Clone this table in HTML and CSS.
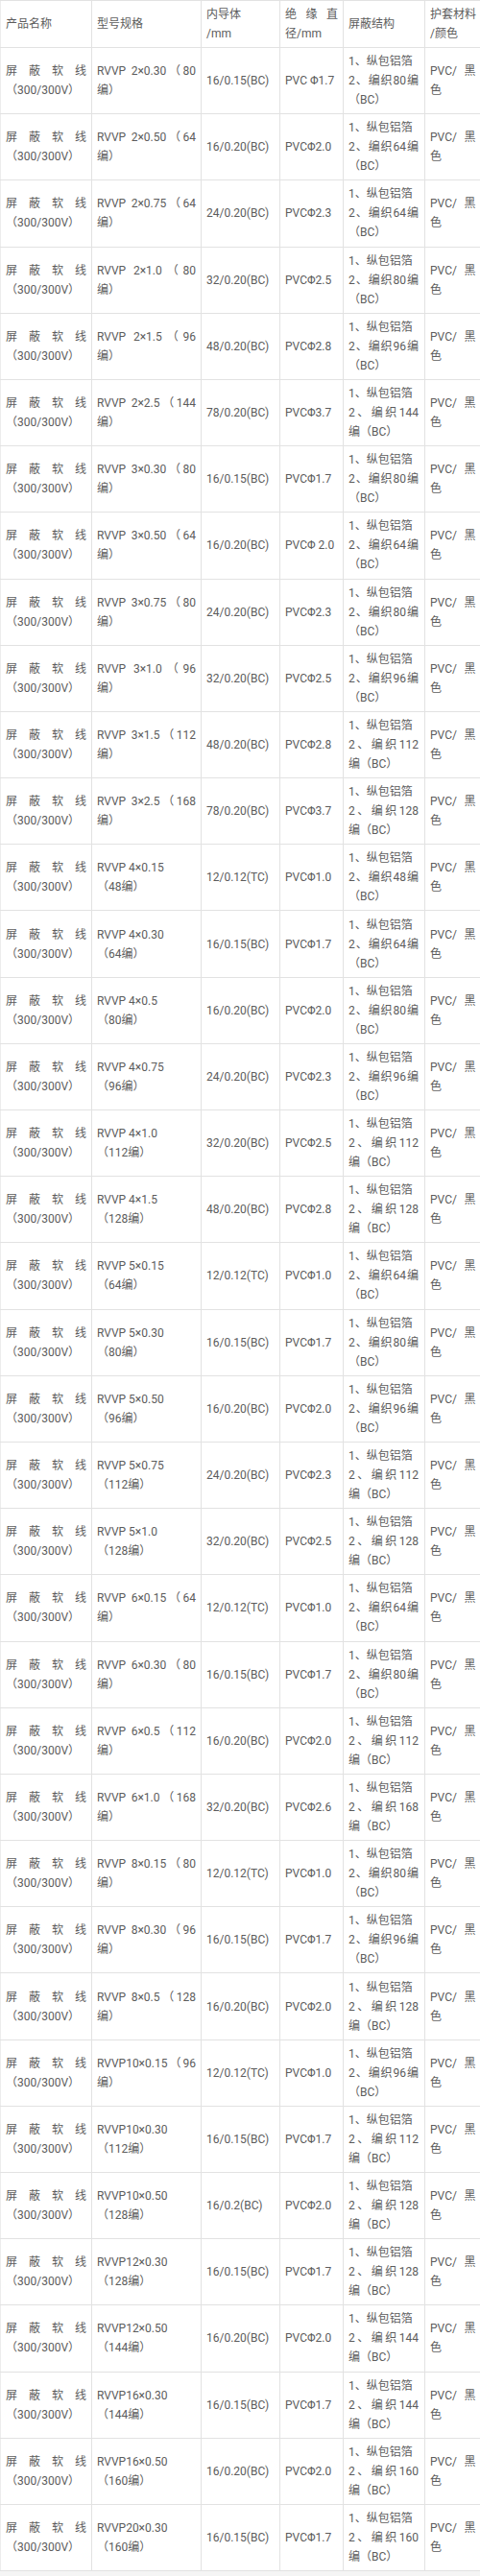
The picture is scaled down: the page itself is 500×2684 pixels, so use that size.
FILE: index.html
```html
<!DOCTYPE html>
<html lang="zh-CN">
<head>
<meta charset="utf-8">
<title>屏蔽软线规格表</title>
<link rel="stylesheet" href="styles.css">
</head>
<body>
<table class="spec">
<colgroup>
<col class="c1"><col class="c2"><col class="c3"><col class="c4"><col class="c5"><col class="c6">
</colgroup>
<thead>
<tr class="head">
<td>产品名称</td><td>型号规格</td><td>内导体<br>/mm</td><td>绝缘直径/mm</td><td>屏蔽结构</td><td class="nowrap">护套材料<br>/颜色</td>
</tr>
</thead>
<tbody>
<tr><td>屏蔽软线（300/300V）</td><td>RVVP 2×0.30（80编）</td><td>16/0.15(BC)</td><td>PVC Φ1.7</td><td>1、纵包铝箔<br>2、编织80编（BC）</td><td>PVC/黑色</td></tr>
<tr><td>屏蔽软线（300/300V）</td><td>RVVP 2×0.50（64编）</td><td>16/0.20(BC)</td><td>PVCΦ2.0</td><td>1、纵包铝箔<br>2、编织64编（BC）</td><td>PVC/黑色</td></tr>
<tr><td>屏蔽软线（300/300V）</td><td>RVVP 2×0.75（64编）</td><td>24/0.20(BC)</td><td>PVCΦ2.3</td><td>1、纵包铝箔<br>2、编织64编（BC）</td><td>PVC/黑色</td></tr>
<tr><td>屏蔽软线（300/300V）</td><td>RVVP 2×1.0（80编）</td><td>32/0.20(BC)</td><td>PVCΦ2.5</td><td>1、纵包铝箔<br>2、编织80编（BC）</td><td>PVC/黑色</td></tr>
<tr><td>屏蔽软线（300/300V）</td><td>RVVP 2×1.5（96编）</td><td>48/0.20(BC)</td><td>PVCΦ2.8</td><td>1、纵包铝箔<br>2、编织96编（BC）</td><td>PVC/黑色</td></tr>
<tr><td>屏蔽软线（300/300V）</td><td>RVVP 2×2.5（144编）</td><td>78/0.20(BC)</td><td>PVCΦ3.7</td><td>1、纵包铝箔<br>2、编织144编（BC）</td><td>PVC/黑色</td></tr>
<tr><td>屏蔽软线（300/300V）</td><td>RVVP 3×0.30（80编）</td><td>16/0.15(BC)</td><td>PVCΦ1.7</td><td>1、纵包铝箔<br>2、编织80编（BC）</td><td>PVC/黑色</td></tr>
<tr><td>屏蔽软线（300/300V）</td><td>RVVP 3×0.50（64编）</td><td>16/0.20(BC)</td><td>PVCΦ 2.0</td><td>1、纵包铝箔<br>2、编织64编（BC）</td><td>PVC/黑色</td></tr>
<tr><td>屏蔽软线（300/300V）</td><td>RVVP 3×0.75（80编）</td><td>24/0.20(BC)</td><td>PVCΦ2.3</td><td>1、纵包铝箔<br>2、编织80编（BC）</td><td>PVC/黑色</td></tr>
<tr><td>屏蔽软线（300/300V）</td><td>RVVP 3×1.0（96编）</td><td>32/0.20(BC)</td><td>PVCΦ2.5</td><td>1、纵包铝箔<br>2、编织96编（BC）</td><td>PVC/黑色</td></tr>
<tr><td>屏蔽软线（300/300V）</td><td>RVVP 3×1.5（112编）</td><td>48/0.20(BC)</td><td>PVCΦ2.8</td><td>1、纵包铝箔<br>2、编织112编（BC）</td><td>PVC/黑色</td></tr>
<tr><td>屏蔽软线（300/300V）</td><td>RVVP 3×2.5（168编）</td><td>78/0.20(BC)</td><td>PVCΦ3.7</td><td>1、纵包铝箔<br>2、编织128编（BC）</td><td>PVC/黑色</td></tr>
<tr><td>屏蔽软线（300/300V）</td><td>RVVP 4×0.15<br>（48编）</td><td>12/0.12(TC)</td><td>PVCΦ1.0</td><td>1、纵包铝箔<br>2、编织48编（BC）</td><td>PVC/黑色</td></tr>
<tr><td>屏蔽软线（300/300V）</td><td>RVVP 4×0.30<br>（64编）</td><td>16/0.15(BC)</td><td>PVCΦ1.7</td><td>1、纵包铝箔<br>2、编织64编（BC）</td><td>PVC/黑色</td></tr>
<tr><td>屏蔽软线（300/300V）</td><td>RVVP 4×0.5<br>（80编）</td><td>16/0.20(BC)</td><td>PVCΦ2.0</td><td>1、纵包铝箔<br>2、编织80编（BC）</td><td>PVC/黑色</td></tr>
<tr><td>屏蔽软线（300/300V）</td><td>RVVP 4×0.75<br>（96编）</td><td>24/0.20(BC)</td><td>PVCΦ2.3</td><td>1、纵包铝箔<br>2、编织96编（BC）</td><td>PVC/黑色</td></tr>
<tr><td>屏蔽软线（300/300V）</td><td>RVVP 4×1.0<br>（112编）</td><td>32/0.20(BC)</td><td>PVCΦ2.5</td><td>1、纵包铝箔<br>2、编织112编（BC）</td><td>PVC/黑色</td></tr>
<tr><td>屏蔽软线（300/300V）</td><td>RVVP 4×1.5<br>（128编）</td><td>48/0.20(BC)</td><td>PVCΦ2.8</td><td>1、纵包铝箔<br>2、编织128编（BC）</td><td>PVC/黑色</td></tr>
<tr><td>屏蔽软线（300/300V）</td><td>RVVP 5×0.15<br>（64编）</td><td>12/0.12(TC)</td><td>PVCΦ1.0</td><td>1、纵包铝箔<br>2、编织64编（BC）</td><td>PVC/黑色</td></tr>
<tr><td>屏蔽软线（300/300V）</td><td>RVVP 5×0.30<br>（80编）</td><td>16/0.15(BC)</td><td>PVCΦ1.7</td><td>1、纵包铝箔<br>2、编织80编（BC）</td><td>PVC/黑色</td></tr>
<tr><td>屏蔽软线（300/300V）</td><td>RVVP 5×0.50<br>（96编）</td><td>16/0.20(BC)</td><td>PVCΦ2.0</td><td>1、纵包铝箔<br>2、编织96编（BC）</td><td>PVC/黑色</td></tr>
<tr><td>屏蔽软线（300/300V）</td><td>RVVP 5×0.75<br>（112编）</td><td>24/0.20(BC)</td><td>PVCΦ2.3</td><td>1、纵包铝箔<br>2、编织112编（BC）</td><td>PVC/黑色</td></tr>
<tr><td>屏蔽软线（300/300V）</td><td>RVVP 5×1.0<br>（128编）</td><td>32/0.20(BC)</td><td>PVCΦ2.5</td><td>1、纵包铝箔<br>2、编织128编（BC）</td><td>PVC/黑色</td></tr>
<tr><td>屏蔽软线（300/300V）</td><td>RVVP 6×0.15（64编）</td><td>12/0.12(TC)</td><td>PVCΦ1.0</td><td>1、纵包铝箔<br>2、编织64编（BC）</td><td>PVC/黑色</td></tr>
<tr><td>屏蔽软线（300/300V）</td><td>RVVP 6×0.30（80编）</td><td>16/0.15(BC)</td><td>PVCΦ1.7</td><td>1、纵包铝箔<br>2、编织80编（BC）</td><td>PVC/黑色</td></tr>
<tr><td>屏蔽软线（300/300V）</td><td>RVVP 6×0.5（112编）</td><td>16/0.20(BC)</td><td>PVCΦ2.0</td><td>1、纵包铝箔<br>2、编织112编（BC）</td><td>PVC/黑色</td></tr>
<tr><td>屏蔽软线（300/300V）</td><td>RVVP 6×1.0（168编）</td><td>32/0.20(BC)</td><td>PVCΦ2.6</td><td>1、纵包铝箔<br>2、编织168编（BC）</td><td>PVC/黑色</td></tr>
<tr><td>屏蔽软线（300/300V）</td><td>RVVP 8×0.15（80编）</td><td>12/0.12(TC)</td><td>PVCΦ1.0</td><td>1、纵包铝箔<br>2、编织80编（BC）</td><td>PVC/黑色</td></tr>
<tr><td>屏蔽软线（300/300V）</td><td>RVVP 8×0.30（96编）</td><td>16/0.15(BC)</td><td>PVCΦ1.7</td><td>1、纵包铝箔<br>2、编织96编（BC）</td><td>PVC/黑色</td></tr>
<tr><td>屏蔽软线（300/300V）</td><td>RVVP 8×0.5（128编）</td><td>16/0.20(BC)</td><td>PVCΦ2.0</td><td>1、纵包铝箔<br>2、编织128编（BC）</td><td>PVC/黑色</td></tr>
<tr><td>屏蔽软线（300/300V）</td><td>RVVP10×0.15（96编）</td><td>12/0.12(TC)</td><td>PVCΦ1.0</td><td>1、纵包铝箔<br>2、编织96编（BC）</td><td>PVC/黑色</td></tr>
<tr><td>屏蔽软线（300/300V）</td><td>RVVP10×0.30<br>（112编）</td><td>16/0.15(BC)</td><td>PVCΦ1.7</td><td>1、纵包铝箔<br>2、编织112编（BC）</td><td>PVC/黑色</td></tr>
<tr><td>屏蔽软线（300/300V）</td><td>RVVP10×0.50<br>（128编）</td><td>16/0.2(BC)</td><td>PVCΦ2.0</td><td>1、纵包铝箔<br>2、编织128编（BC）</td><td>PVC/黑色</td></tr>
<tr><td>屏蔽软线（300/300V）</td><td>RVVP12×0.30<br>（128编）</td><td>16/0.15(BC)</td><td>PVCΦ1.7</td><td>1、纵包铝箔<br>2、编织128编（BC）</td><td>PVC/黑色</td></tr>
<tr><td>屏蔽软线（300/300V）</td><td>RVVP12×0.50<br>（144编）</td><td>16/0.20(BC)</td><td>PVCΦ2.0</td><td>1、纵包铝箔<br>2、编织144编（BC）</td><td>PVC/黑色</td></tr>
<tr><td>屏蔽软线（300/300V）</td><td>RVVP16×0.30<br>（144编）</td><td>16/0.15(BC)</td><td>PVCΦ1.7</td><td>1、纵包铝箔<br>2、编织144编（BC）</td><td>PVC/黑色</td></tr>
<tr><td>屏蔽软线（300/300V）</td><td>RVVP16×0.50<br>（160编）</td><td>16/0.20(BC)</td><td>PVCΦ2.0</td><td>1、纵包铝箔<br>2、编织160编（BC）</td><td>PVC/黑色</td></tr>
<tr><td>屏蔽软线（300/300V）</td><td>RVVP20×0.30<br>（160编）</td><td>16/0.15(BC)</td><td>PVCΦ1.7</td><td>1、纵包铝箔<br>2、编织160编（BC）</td><td>PVC/黑色</td></tr>
</tbody>
</table>
</body>
</html>
```
FILE: styles.css
```css
html, body {
  margin: 0;
  padding: 0;
  background: #f5f5f5;
}

body {
  font-family: Roboto, "Noto Sans CJK SC", sans-serif;
  font-size: 12px;
  line-height: 20px;
  color: #5c5c5c;
}

.spec {
  width: 500px;
  table-layout: fixed;
  border-collapse: collapse;
  background: #fff;
}

.c1 { width: 95px; }
.c2 { width: 114px; }
.c3 { width: 82px; }
.c4 { width: 66px; }
.c5 { width: 85px; }
.c6 { width: 58px; }

.spec td {
  border: 1px solid #e2e2e2;
  padding: 0 5px;
  vertical-align: middle;
  text-align: justify;
  word-wrap: break-word;
  text-spacing-trim: space-all;
}

.spec td:first-child {
  border-left-color: #ececec;
}

.spec td:last-child {
  border-right: none;
}

.spec td:nth-child(5) {
  padding-right: 6px;
}

.spec td.nowrap {
  white-space: nowrap;
}

.spec .head {
  height: 49px;
}

.spec tbody tr {
  height: 69.2px;
}
```
